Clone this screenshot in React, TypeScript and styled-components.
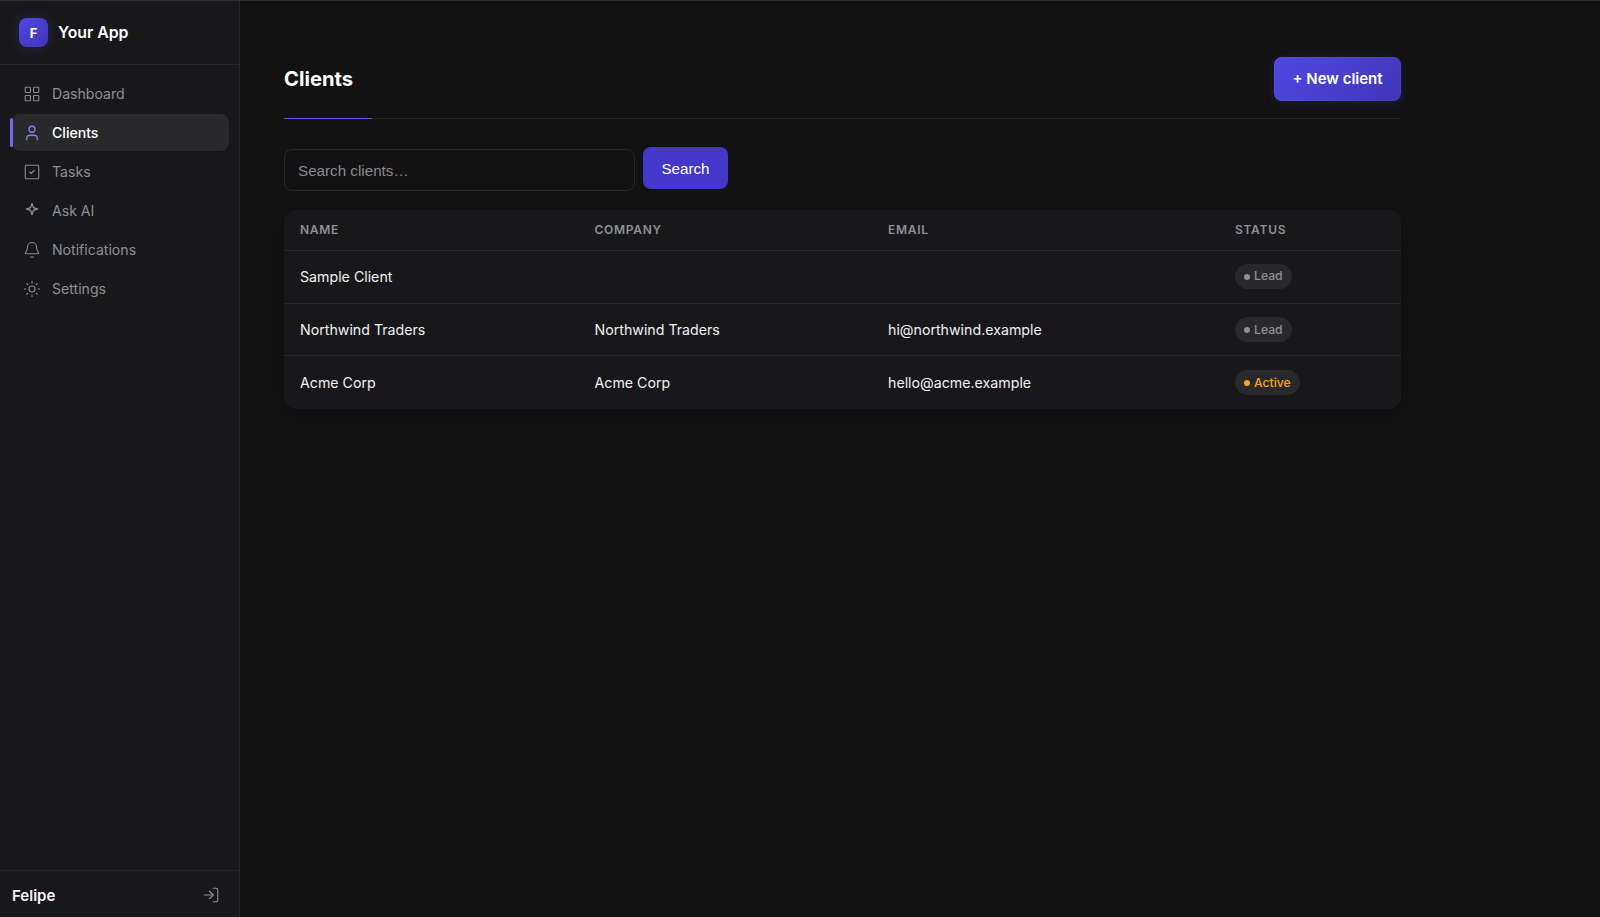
import React from 'react'
import styled, { createGlobalStyle } from 'styled-components'
import { Bell, LayoutGrid, LogIn, SquareCheck, Sun, User } from 'lucide-react'

const GlobalStyle = createGlobalStyle`
  * { box-sizing: border-box; }
  html, body { margin: 0; height: 100%; background: #121213; }
  body { font-family: Inter, "Liberation Sans", sans-serif; color: #f2f2f4; border-top: 1px solid #2c2c2e; }
  #root { height: 916px; }
`

const Shell = styled.div`
  display: flex;
  height: 100%;
`

const Sidebar = styled.aside`
  width: 240px;
  flex-shrink: 0;
  display: flex;
  flex-direction: column;
  background: #18181a;
  border-right: 1px solid #262628;
`

const Brand = styled.div`
  height: 64px;
  display: flex;
  align-items: center;
  gap: 10px;
  padding: 0 19px;
  border-bottom: 1px solid #262628;
  font-size: 15.8px;
  font-weight: 600;
  color: #fff;
`

const Logo = styled.div`
  width: 29px;
  height: 29px;
  border-radius: 8px;
  display: flex;
  align-items: center;
  justify-content: center;
  font-size: 13px;
  font-weight: 700;
  color: #fff;
  background: linear-gradient(135deg, #5148e0, #4034b8);
  box-shadow: 0 0 12px rgba(79, 70, 229, 0.3);
`

const Nav = styled.nav`
  flex: 1;
  display: flex;
  flex-direction: column;
  gap: 2px;
  padding: 10px 10px 10px 12px;
`

const NavItem = styled.a<{ $active?: boolean }>`
  position: relative;
  height: 37px;
  display: flex;
  align-items: center;
  gap: 11px;
  padding: 0 11px;
  border-radius: 8px;
  font-size: 14.1px;
  font-weight: ${p => (p.$active ? 500 : 400)};
  color: ${p => (p.$active ? '#fff' : '#8f8f96')};
  background: ${p => (p.$active ? '#29292c' : 'transparent')};

  svg {
    flex-shrink: 0;
    color: ${p => (p.$active ? '#8180f4' : '#8a8a90')};
  }

  ${p =>
    p.$active &&
    `&::before {
      content: '';
      position: absolute;
      left: -2px;
      top: 4px;
      bottom: 4px;
      width: 3px;
      border-radius: 2px;
      background: #6c6cf2;
    }`}
`

const SidebarFooter = styled.div`
  height: 47px;
  display: flex;
  align-items: center;
  justify-content: space-between;
  padding: 2px 19px 0 12px;
  border-top: 1px solid #262628;
  font-size: 15px;
  font-weight: 600;
  color: #f4f4f5;

  svg {
    color: #8f8f96;
  }
`

const Main = styled.main`
  flex: 1;
  padding: 56px 0 0 44px;
`

const Content = styled.div`
  width: 1117px;
`

const PageHeader = styled.header`
  position: relative;
  height: 62px;
  display: flex;
  align-items: flex-start;
  justify-content: space-between;
  border-bottom: 1px solid #262628;

  &::after {
    content: '';
    position: absolute;
    left: 0;
    bottom: -1px;
    width: 88px;
    height: 1px;
    background: #5a5ae0;
  }
`

const Title = styled.h1`
  margin: 9px 0 0;
  font-size: 20.2px;
  line-height: 26px;
  font-weight: 700;
  color: #fff;
`

const NewButton = styled.button`
  width: 127px;
  height: 44px;
  padding: 0 0 2px;
  border: none;
  border-radius: 8px;
  font: 600 15px Inter, sans-serif;
  color: #fff;
  background: linear-gradient(135deg, #5048e2, #4036b8);
  box-shadow: 0 2px 8px rgba(79, 70, 229, 0.2), inset 0 0 0 1px rgba(255, 255, 255, 0.06);
`

const SearchRow = styled.form`
  display: flex;
  align-items: flex-start;
  gap: 8px;
  margin-top: 28px;
`

const SearchInput = styled.input`
  width: 351px;
  height: 42px;
  margin-top: 2px;
  padding: 0 13px;
  border: 1px solid #29292b;
  border-radius: 8px;
  background: #121213;
  font: 400 15.2px "Liberation Sans", Arial, sans-serif;
  color: #f2f2f4;

  &::placeholder {
    color: #8a8a90;
    opacity: 1;
  }
`

const SearchButton = styled.button`
  width: 85px;
  height: 42px;
  border: none;
  border-radius: 8px;
  font: 400 15.2px "Liberation Sans", Arial, sans-serif;
  color: #fff;
  background: #4338ca;
`

const TableCard = styled.div`
  margin-top: 19px;
  border-radius: 12px;
  overflow: hidden;
  background: #18181a;
  box-shadow: 0 4px 16px rgba(0, 0, 0, 0.3);
`

const Row = styled.div<{ $height: number }>`
  display: grid;
  grid-template-columns: 294.5px 293.5px 347px 1fr;
  align-items: center;
  height: ${p => p.$height}px;
  padding-left: 16px;
  border-bottom: 1px solid #29292b;

  &:nth-child(-n + 2) {
    padding-bottom: 2px;
  }

  &:last-child {
    border-bottom: none;
  }
`

const HeadCell = styled.div`
  font-size: 12px;
  font-weight: 600;
  letter-spacing: 0.72px;
  text-transform: uppercase;
  color: #8f8f96;
`

const Cell = styled.div`
  font-size: 14.2px;
  color: #f0f0f2;
`

const Badge = styled.span<{ $tone: 'lead' | 'active' }>`
  display: inline-flex;
  align-items: center;
  gap: 4px;
  height: 25px;
  padding: 0 9px 1px;
  border-radius: 999px;
  font-size: 12.2px;
  font-weight: 500;
  background: #29292c;
  color: ${p => (p.$tone === 'active' ? '#f5a81c' : '#8f8f96')};

  &::before {
    content: '';
    width: 6px;
    height: 6px;
    margin-top: 2px;
    border-radius: 50%;
    background: currentColor;
  }
`

const SparkIcon: React.FC = () => (
  <svg width="18" height="18" viewBox="0 0 18 18" fill="none" stroke="currentColor" strokeWidth="1.4" strokeLinejoin="round">
    <path d="M9 1.5 L10.4 5.6 L14.5 7 L10.4 8.4 L9 12.5 L7.6 8.4 L3.5 7 L7.6 5.6 Z" />
  </svg>
)

const navItems: { label: string; icon: React.ReactNode; active?: boolean }[] = [
  { label: 'Dashboard', icon: <LayoutGrid size={18} strokeWidth={1.5} /> },
  { label: 'Clients', icon: <User size={18} strokeWidth={1.75} />, active: true },
  { label: 'Tasks', icon: <SquareCheck size={18} strokeWidth={1.5} /> },
  { label: 'Ask AI', icon: <SparkIcon /> },
  { label: 'Notifications', icon: <Bell size={18} strokeWidth={1.5} /> },
  { label: 'Settings', icon: <Sun size={18} strokeWidth={1.5} /> }
]

const clients: { name: string; company: string; email: string; status: 'Lead' | 'Active' }[] = [
  { name: 'Sample Client', company: '', email: '', status: 'Lead' },
  { name: 'Northwind Traders', company: 'Northwind Traders', email: 'hi@northwind.example', status: 'Lead' },
  { name: 'Acme Corp', company: 'Acme Corp', email: 'hello@acme.example', status: 'Active' }
]

const App: React.FC = () => {
  return (
    <>
      <GlobalStyle />
      <Shell>
        <Sidebar>
          <Brand>
            <Logo>F</Logo>
            Your App
          </Brand>
          <Nav>
            {navItems.map(({ label, icon, active }) => (
              <NavItem key={label} $active={active}>
                {icon}
                {label}
              </NavItem>
            ))}
          </Nav>
          <SidebarFooter>
            Felipe
            <LogIn size={18} strokeWidth={1.5} />
          </SidebarFooter>
        </Sidebar>
        <Main>
          <Content>
            <PageHeader>
              <Title>Clients</Title>
              <NewButton>+ New client</NewButton>
            </PageHeader>
            <SearchRow>
              <SearchInput placeholder="Search clients…" />
              <SearchButton type="button">Search</SearchButton>
            </SearchRow>
            <TableCard>
              <Row $height={41}>
                <HeadCell>Name</HeadCell>
                <HeadCell>Company</HeadCell>
                <HeadCell>Email</HeadCell>
                <HeadCell>Status</HeadCell>
              </Row>
              {clients.map(c => (
                <Row key={c.name} $height={c.name === 'Northwind Traders' ? 52 : 53}>
                  <Cell>{c.name}</Cell>
                  <Cell>{c.company}</Cell>
                  <Cell>{c.email}</Cell>
                  <Cell>
                    <Badge $tone={c.status === 'Active' ? 'active' : 'lead'}>{c.status}</Badge>
                  </Cell>
                </Row>
              ))}
            </TableCard>
          </Content>
        </Main>
      </Shell>
    </>
  )
}

export default App
